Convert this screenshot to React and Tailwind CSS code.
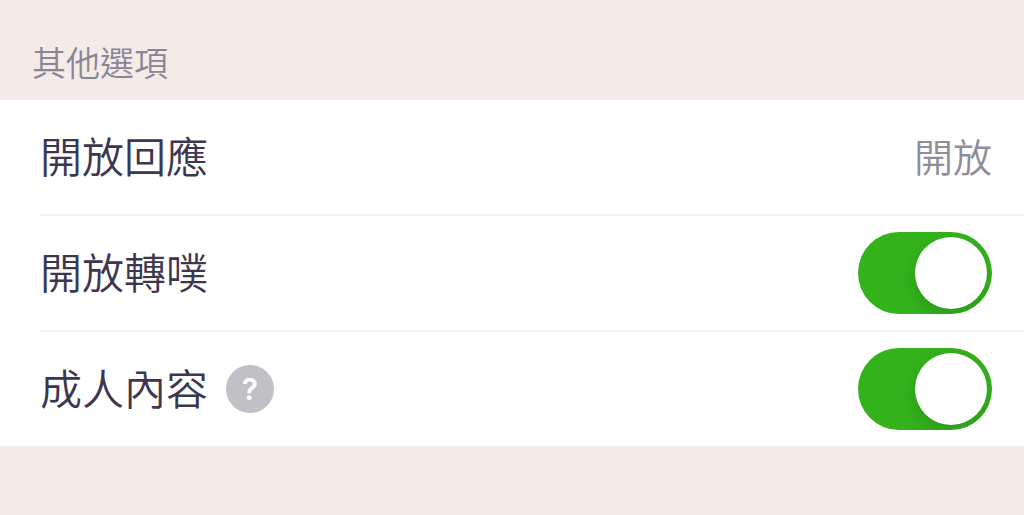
import { useState } from "react";

function Row({ children }) {
  return (
    <li className="group pl-10">
      <div className="border-b-2 border-[#f4f0f0] group-last:border-b-0">
        <div className="flex h-[114px] items-center justify-between pr-8">
          {children}
        </div>
      </div>
    </li>
  );
}

function Toggle({ id, checked, onChange }) {
  return (
    <span className="relative inline-flex h-[82px] w-[134px] shrink-0 items-center overflow-hidden rounded-full bg-[#c1c0c6] p-[5px] has-checked:justify-end has-checked:bg-[#34b21c]">
      <input
        id={id}
        type="checkbox"
        role="switch"
        checked={checked}
        onChange={(e) => onChange(e.target.checked)}
        className="absolute inset-0 size-full cursor-pointer appearance-none rounded-full"
      />
      <span className="pointer-events-none size-[72px] rounded-full bg-white shadow-[0_6px_16px_rgba(0,0,0,0.15)]" />
    </span>
  );
}

export default function App() {
  const [replurk, setReplurk] = useState(true);
  const [adult, setAdult] = useState(true);

  return (
    <main
      lang="zh-TW"
      className="min-h-screen bg-[#f4ebe9] font-['Noto_Sans_CJK_TC',sans-serif] text-[42px] leading-[60px] font-[350] text-[#3c374f]"
    >
      <h2 className="px-8 pt-10 pb-4 text-[34px] leading-[44px] font-[350] text-[#8b8593]">
        其他選項
      </h2>
      <ul className="bg-white">
        <Row>
          <span className="pb-1">開放回應</span>
          <button
            type="button"
            aria-label="開放回應：開放"
            className="pb-1 text-[39px] text-[#8f8d9b]"
          >
            開放
          </button>
        </Row>
        <Row>
          <label htmlFor="replurk" className="pb-1">
            開放轉噗
          </label>
          <Toggle id="replurk" checked={replurk} onChange={setReplurk} />
        </Row>
        <Row>
          <div className="flex items-center gap-[18px]">
            <label htmlFor="adult" className="pb-1">
              成人內容
            </label>
            <button
              type="button"
              aria-label="說明"
              className="flex size-12 items-center justify-center rounded-full bg-[#c1c0c6] font-[Inter,sans-serif] text-[30px] leading-none font-semibold text-white"
            >
              ?
            </button>
          </div>
          <Toggle id="adult" checked={adult} onChange={setAdult} />
        </Row>
      </ul>
    </main>
  );
}
